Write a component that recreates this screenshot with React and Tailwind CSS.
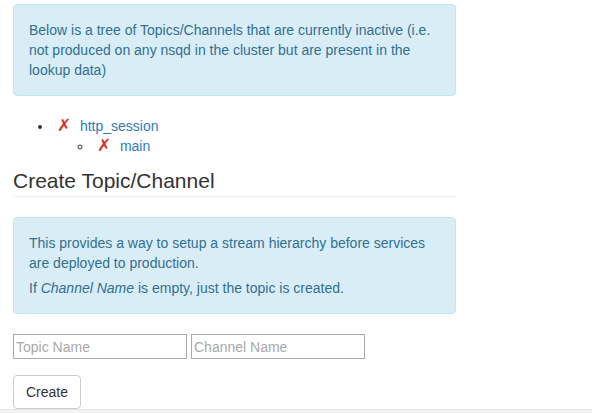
import React from 'react';

const tree = [
  { name: 'http_session', channels: ['main'] },
];

export default function App() {
  return (
    <div
      className="h-[413px] overflow-hidden bg-white flex flex-col text-[14px] leading-5 text-[#333]"
      style={{ fontFamily: '"Liberation Sans", Arial, Helvetica, sans-serif' }}
    >
      <div className="flex-1 px-[13px] pt-1">
        <div className="w-[443px] rounded border border-[#bce8f1] bg-[#d9edf7] p-[15px] text-[#31708f]">
          <p>
            Below is a tree of Topics/Channels that are currently inactive (i.e. not produced on any nsqd
            in the cluster but are present in the lookup data)
          </p>
        </div>

        <ul className="mt-5 list-disc pl-10">
          {tree.map((topic) => (
            <li key={topic.name}>
              <span className="ml-[4px] text-[17px] leading-5 text-[#d2322d]">✗</span>{' '}
              <a href="#" className="ml-[5px] text-[#337ab7]">{topic.name}</a>
              <ul className="list-[circle] pl-10">
                {topic.channels.map((ch) => (
                  <li key={ch}>
                    <span className="ml-[4px] text-[17px] leading-5 text-[#d2322d]">✗</span>{' '}
                    <a href="#" className="ml-[5px] text-[#337ab7]">{ch}</a>
                  </li>
                ))}
              </ul>
            </li>
          ))}
        </ul>

        <div className="mt-[13px] w-[443px] border-b border-[#eee] pb-1">
          <h2 className="text-[21px] leading-[23px] font-normal text-[#333]">Create Topic/Channel</h2>
        </div>

        <div className="mt-5 w-[443px] rounded border border-[#bce8f1] bg-[#d9edf7] p-[15px] text-[#31708f]">
          <p>This provides a way to setup a stream hierarchy before services are deployed to production.</p>
          <p className="mt-[5px]">
            If <em>Channel Name</em> is empty, just the topic is created.
          </p>
        </div>

        <form className="mt-5">
          <div className="flex gap-1">
            <input
              type="text"
              placeholder="Topic Name"
              className="h-[25px] w-[174px] border border-[#a9a9a9] px-[2px] text-[14px] placeholder:text-[#a9a9a9] outline-none"
            />
            <input
              type="text"
              placeholder="Channel Name"
              className="h-[25px] w-[174px] border border-[#a9a9a9] px-[2px] text-[14px] placeholder:text-[#a9a9a9] outline-none"
            />
          </div>
          <button
            type="button"
            className="mt-4 h-[34px] rounded border border-[#ccc] bg-white px-3 text-[14px] leading-5 text-[#333]"
          >
            Create
          </button>
        </form>
      </div>
      <div className="h-1 border-t border-[#e6e6e6] bg-[#f2f2f2]" />
    </div>
  );
}
